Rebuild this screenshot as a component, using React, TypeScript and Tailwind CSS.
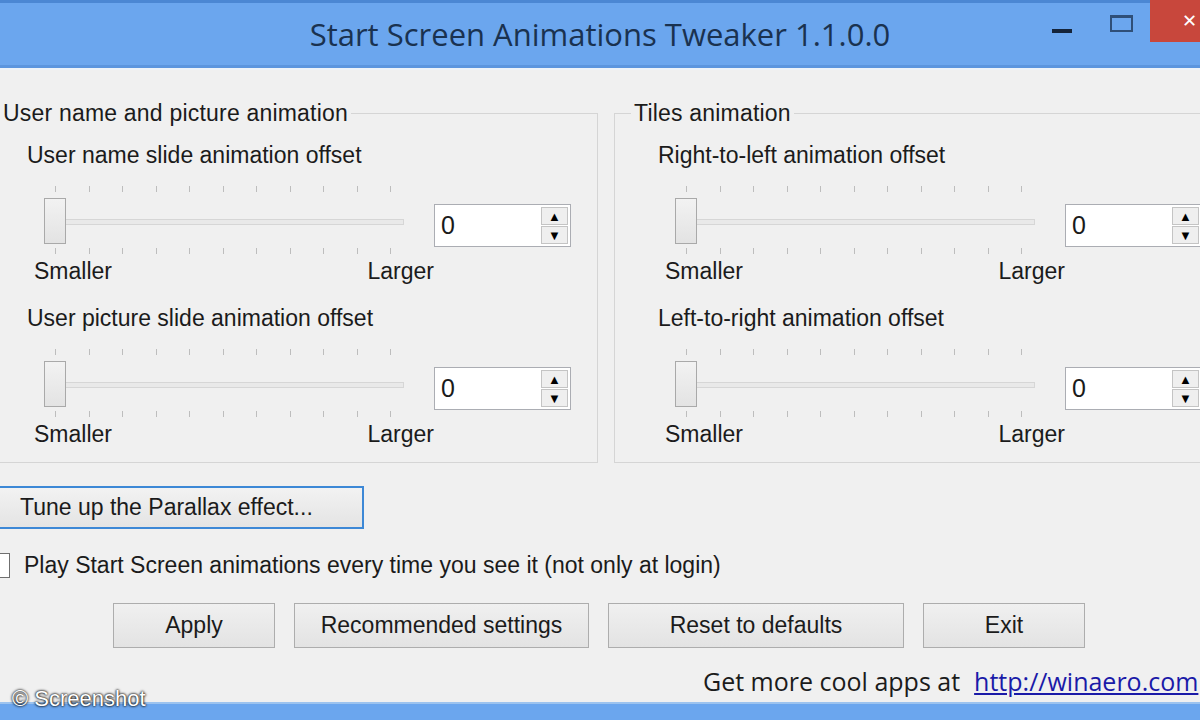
const ticks = Array.from({ length: 11 })

function Slider() {
  return (
    <div className="w-[360px] flex-none">
      <div className="flex justify-between pl-[11px] pr-[13px] h-[6px]">
        {ticks.map((_, i) => (
          <span key={i} className="w-px h-full bg-[#bdbdbd]" />
        ))}
      </div>
      <div className="relative h-[46px] mt-[6px]">
        <div className="absolute left-[14px] right-0 top-[21px] h-[6px] border border-[#d6d6d6] bg-[#e9e9e9]" />
        <div className="absolute left-0 top-0 w-[22px] h-[46px] border border-[#a9a9a9] bg-gradient-to-b from-[#f2f2f2] to-[#e3e3e3]" />
      </div>
      <div className="flex justify-between pl-[11px] pr-[13px] h-[6px] mt-[4px]">
        {ticks.map((_, i) => (
          <span key={i} className="w-px h-full bg-[#bdbdbd]" />
        ))}
      </div>
    </div>
  )
}

function Spin() {
  return (
    <div className="ml-[30px] mt-[18px] w-[137px] h-[43px] flex-none flex border border-[#abadb3] bg-white">
      <div className="flex-1 pl-[6px] leading-[41px] text-[25px] text-[#1a1a1a]">0</div>
      <div className="w-[31px] flex flex-col p-[2px] gap-px">
        <div className="flex-1 flex items-center justify-center border border-[#c4c4c4] bg-[#efefef] text-[13px] leading-none text-black">▲</div>
        <div className="flex-1 flex items-center justify-center border border-[#c4c4c4] bg-[#efefef] text-[13px] leading-none text-black">▼</div>
      </div>
    </div>
  )
}

function OffsetBlock({ label, first }: { label: string; first?: boolean }) {
  return (
    <div className={first ? '' : 'mt-[21px]'}>
      <div className="h-[26px] leading-[26px]">{label}</div>
      <div className="flex items-start mt-[18px] ml-[17px]">
        <Slider />
        <Spin />
      </div>
      <div className="flex justify-between w-[400px] ml-[7px] mt-[4px] h-[26px] leading-[26px]">
        <span>Smaller</span>
        <span>Larger</span>
      </div>
    </div>
  )
}

function Group({ title, a, b }: { title: string; a: string; b: string }) {
  return (
    <fieldset className="w-[615px] flex-none border border-[#d5d5d5] p-0 m-0 pb-[15px]">
      <legend className="ml-[16px] px-[3px] h-[26px] leading-[26px] tracking-[0.2px]">{title}</legend>
      <div className="pl-[43px] pt-[16px]">
        <OffsetBlock label={a} first />
        <OffsetBlock label={b} />
      </div>
    </fieldset>
  )
}

function Btn({ children, w }: { children: React.ReactNode; w: string }) {
  return (
    <div className={`${w} h-[45px] flex items-center justify-center border border-[#adadad] bg-gradient-to-b from-[#f0f0f0] to-[#e3e3e3]`}>
      {children}
    </div>
  )
}

export default function App() {
  return (
    <div
      className="relative w-[1200px] h-[720px] overflow-hidden bg-[#f0f0f0] flex flex-col text-[23px] text-[#1b1b1b]"
      style={{ fontFamily: '"Liberation Sans", Arial, sans-serif' }}
    >
      {/* title bar */}
      <div className="h-[70px] flex-none border-t-[3px] border-[#4b87d3] bg-[#6ba6ee] border-b-2 border-b-[#edf3f9] shadow-[inset_0_-3px_0_#5b95de]">
        <div className="grid grid-cols-[150px_1fr_150px] h-full">
          <div />
          <div
            className="text-center text-[31px] leading-[62px] text-[#1a3250] whitespace-nowrap"
            style={{ fontFamily: '"Open Sans", "Noto Sans", sans-serif' }}
          >
            Start Screen Animations Tweaker 1.1.0.0
          </div>
          <div className="flex items-start">
            <div className="w-[20px] h-[4px] bg-[#15243a] mt-[26px] ml-[2px]" />
            <div className="w-[23px] h-[17px] border-2 border-t-[3px] border-[#2f4f78] mt-[12px] ml-[38px]" />
            <div className="w-[50px] h-[42px] bg-[#c8473c] ml-[17px] -mt-[3px] flex items-center justify-end pr-[3px] text-white text-[18px] leading-none">
              <span>✕</span>
            </div>
          </div>
        </div>
      </div>

      {/* body */}
      <div className="flex-1 flex flex-col">
        <div className="flex gap-[16px] w-[1246px] -ml-[17px] mt-[30px] flex-none">
          <Group
            title="User name and picture animation"
            a="User name slide animation offset"
            b="User picture slide animation offset"
          />
          <Group title="Tiles animation" a="Right-to-left animation offset" b="Left-to-right animation offset" />
        </div>

        <div className="-ml-[8px] mt-[23px] w-[372px] h-[43px] flex items-center pl-[26px] border-2 border-[#3d88d6] bg-gradient-to-b from-[#f2f2f2] to-[#e4e4e4] flex-none">
          Tune up the Parallax effect...
        </div>

        <div className="flex items-center mt-[23px] h-[26px] flex-none">
          <div className="-ml-[15px] w-[25px] h-[25px] border border-[#6f6f6f] bg-white" />
          <span className="ml-[14px]">
            Play Start Screen animations every time you see it (not only at login)
          </span>
        </div>

        <div className="flex gap-[19px] ml-[113px] mt-[25px] flex-none">
          <Btn w="w-[162px]">Apply</Btn>
          <Btn w="w-[295px]">Recommended settings</Btn>
          <Btn w="w-[296px]">Reset to defaults</Btn>
          <Btn w="w-[162px]">Exit</Btn>
        </div>

        <div
          className="flex ml-[703px] mt-[20px] h-[26px] leading-[26px] text-[25px] whitespace-nowrap flex-none"
          style={{ fontFamily: '"Open Sans", "Noto Sans", sans-serif' }}
        >
          <span>Get more cool apps at</span>
          <span className="ml-[14px] text-[#1a1aa8] underline">http://winaero.com</span>
        </div>
      </div>

      {/* bottom frame */}
      <div className="h-[18px] flex-none bg-[#6ba6ee] border-t-2 border-[#9cc3ef]" />

      <div className="absolute left-[12px] bottom-[10px] text-white text-[22px] leading-none [text-shadow:0_0_3px_#000,0_0_2px_#000]">
        © Screenshot
      </div>
    </div>
  )
}
